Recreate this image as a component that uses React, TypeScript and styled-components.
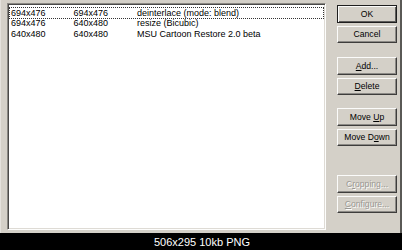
import styled, { createGlobalStyle, css } from "styled-components";

const GlobalStyle = createGlobalStyle`
  html, body {
    margin: 0;
    padding: 0;
    background: #000;
  }
  * {
    box-sizing: border-box;
  }
`;

const Frame = styled.div`
  width: 402px;
  height: 250px;
  display: flex;
  flex-direction: column;
  overflow: hidden;
`;

const Dialog = styled.div`
  height: 233px;
  display: flex;
  align-items: flex-start;
  background: #d4d0c8;
  border-left: 1px solid #e4e1dc;
  border-right: 2px solid #5a5956;
  padding: 3px 0 0 6px;
  font-family: "Liberation Sans", Arial, sans-serif;
`;

const ListBox = styled.div`
  width: 319px;
  height: 227px;
  background: #fff;
  border: 1px solid;
  border-color: #8a8883 #fdfdfc #fdfdfc #8a8883;
  box-shadow: inset 1px 1px #4a4948, inset -1px -1px #dedbd5;
  padding: 4px 2px 0 2px;
`;

const Row = styled.div<{ $focused?: boolean }>`
  display: grid;
  grid-template-columns: 62.5px 63.5px 1fr;
  height: 10.4px;
  line-height: 10.4px;
  padding-left: 1px;
  font-size: 9px;
  color: #000;
  white-space: nowrap;
  ${(p) =>
    p.$focused &&
    css`
      outline: 1px dotted #333;
      outline-offset: 0px;
    `}
`;

const ButtonColumn = styled.div`
  margin-left: 11px;
  width: 60px;
  padding-top: 2px;
  display: flex;
  flex-direction: column;
`;

const Group = styled.div<{ $after: number }>`
  display: flex;
  flex-direction: column;
  gap: 3px;
  margin-bottom: ${(p) => p.$after}px;
`;

const Button = styled.button<{ $default?: boolean }>`
  height: 17.5px;
  width: 60px;
  padding: 0;
  margin: 0;
  font-family: "Liberation Sans", Arial, sans-serif;
  font-size: 8.6px;
  color: #000;
  background: #d4d0c8;
  border: 1px solid;
  border-color: #fbfbfa #3e3d3c #3e3d3c #fbfbfa;
  box-shadow: inset -1px -1px #8c8a86;
  cursor: default;

  ${(p) =>
    p.$default &&
    css`
      border-color: #1e1e1e;
      box-shadow: inset 1px 1px #fbfbfa, inset -1px -1px #5e5d5b;
    `}

  &:disabled {
    color: #9a9893;
    text-shadow: 1px 1px #fdfdfc;
  }

  u {
    text-decoration-thickness: 1px;
    text-underline-offset: 1px;
  }
`;

const Caption = styled.div`
  flex: 1;
  background: #000;
  color: #fff;
  display: flex;
  align-items: center;
  justify-content: center;
  font-family: "Liberation Sans", Arial, sans-serif;
  font-size: 11px;
  padding-left: 2px;
`;

const filters = [
  { src: "694x476", dst: "694x476", name: "deinterlace (mode: blend)" },
  { src: "694x476", dst: "640x480", name: "resize (Bicubic)" },
  { src: "640x480", dst: "640x480", name: "MSU Cartoon Restore 2.0 beta" },
];

export default function App() {
  return (
    <>
      <GlobalStyle />
      <Frame>
        <Dialog>
          <ListBox>
            {filters.map((f, i) => (
              <Row key={i} $focused={i === 0}>
                <span>{f.src}</span>
                <span>{f.dst}</span>
                <span>{f.name}</span>
              </Row>
            ))}
          </ListBox>
          <ButtonColumn>
            <Group $after={14}>
              <Button $default>OK</Button>
              <Button>Cancel</Button>
            </Group>
            <Group $after={13}>
              <Button>
                <u>A</u>dd...
              </Button>
              <Button>
                <u>D</u>elete
              </Button>
            </Group>
            <Group $after={29}>
              <Button>
                Move <u>U</u>p
              </Button>
              <Button>
                Move D<u>o</u>wn
              </Button>
            </Group>
            <Group $after={0}>
              <Button disabled>
                C<u>r</u>opping...
              </Button>
              <Button disabled>
                <u>C</u>onfigure...
              </Button>
            </Group>
          </ButtonColumn>
        </Dialog>
        <Caption>506x295 10kb PNG</Caption>
      </Frame>
    </>
  );
}
